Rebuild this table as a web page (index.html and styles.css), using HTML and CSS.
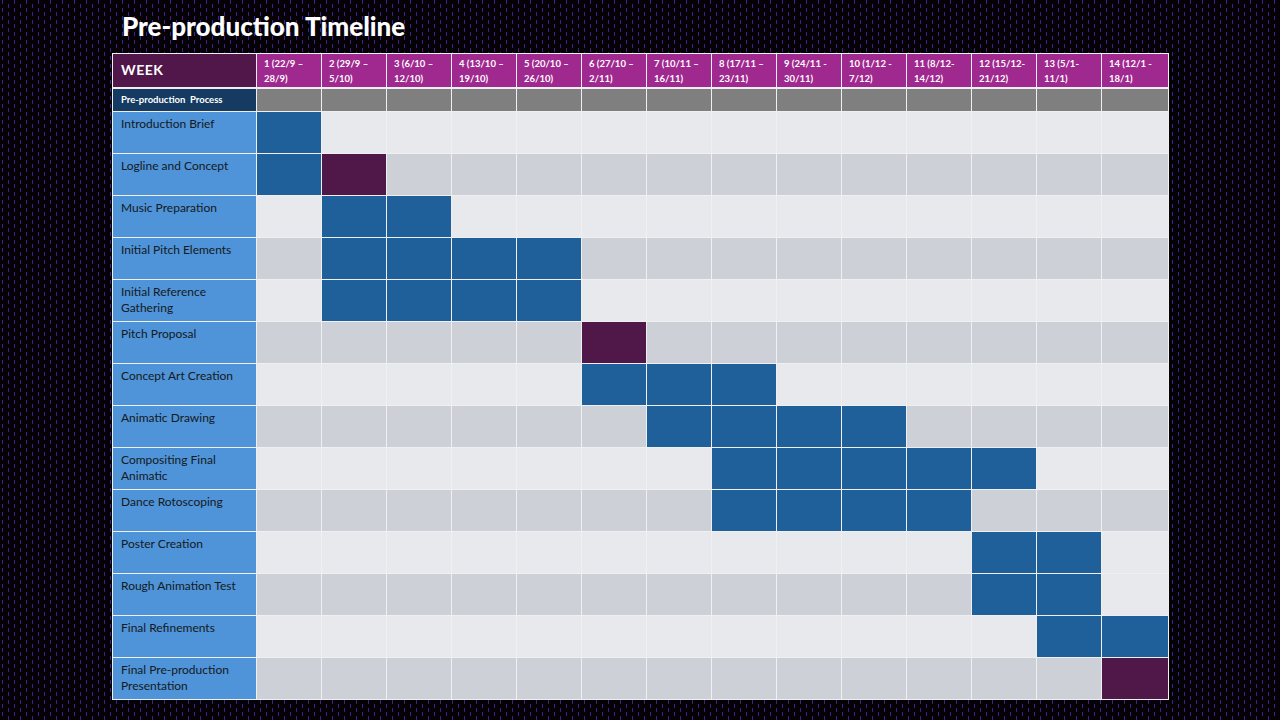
FILE: index.html
```html
<!DOCTYPE html>
<html lang="en">
<head>
<meta charset="utf-8">
<title>Pre-production Timeline</title>
<link rel="stylesheet" href="styles.css">
</head>
<body>
<main class="page">
  <h1 class="title">Pre-production Timeline</h1>
  <div class="timeline">
    <div class="row head">
      <div class="label week">WEEK</div>
      <div class="wk">1 (22/9 –<br>28/9)</div>
      <div class="wk">2 (29/9 –<br>5/10)</div>
      <div class="wk">3 (6/10 –<br>12/10)</div>
      <div class="wk">4 (13/10 –<br>19/10)</div>
      <div class="wk">5 (20/10 –<br>26/10)</div>
      <div class="wk">6 (27/10 –<br>2/11)</div>
      <div class="wk">7 (10/11 –<br>16/11)</div>
      <div class="wk">8 (17/11 –<br>23/11)</div>
      <div class="wk">9 (24/11 -<br>30/11)</div>
      <div class="wk">10 (1/12 -<br>7/12)</div>
      <div class="wk">11 (8/12-<br>14/12)</div>
      <div class="wk">12 (15/12-<br>21/12)</div>
      <div class="wk">13 (5/1-<br>11/1)</div>
      <div class="wk">14 (12/1 -<br>18/1)</div>
    </div>
    <div class="row section">
      <div class="label proc">Pre-production&nbsp; Process</div>
      <div class="g"></div><div class="g"></div><div class="g"></div><div class="g"></div><div class="g"></div><div class="g"></div><div class="g"></div>
      <div class="g"></div><div class="g"></div><div class="g"></div><div class="g"></div><div class="g"></div><div class="g"></div><div class="g"></div>
    </div>
    <div class="row odd">
      <div class="label task">Introduction Brief</div>
      <div class="c b"></div><div class="c"></div><div class="c"></div><div class="c"></div><div class="c"></div><div class="c"></div><div class="c"></div>
      <div class="c"></div><div class="c"></div><div class="c"></div><div class="c"></div><div class="c"></div><div class="c"></div><div class="c"></div>
    </div>
    <div class="row even">
      <div class="label task">Logline and Concept</div>
      <div class="c b"></div><div class="c p"></div><div class="c"></div><div class="c"></div><div class="c"></div><div class="c"></div><div class="c"></div>
      <div class="c"></div><div class="c"></div><div class="c"></div><div class="c"></div><div class="c"></div><div class="c"></div><div class="c"></div>
    </div>
    <div class="row odd">
      <div class="label task">Music Preparation</div>
      <div class="c"></div><div class="c b"></div><div class="c b"></div><div class="c"></div><div class="c"></div><div class="c"></div><div class="c"></div>
      <div class="c"></div><div class="c"></div><div class="c"></div><div class="c"></div><div class="c"></div><div class="c"></div><div class="c"></div>
    </div>
    <div class="row even">
      <div class="label task">Initial Pitch Elements</div>
      <div class="c"></div><div class="c b"></div><div class="c b"></div><div class="c b"></div><div class="c b"></div><div class="c"></div><div class="c"></div>
      <div class="c"></div><div class="c"></div><div class="c"></div><div class="c"></div><div class="c"></div><div class="c"></div><div class="c"></div>
    </div>
    <div class="row odd">
      <div class="label task">Initial Reference Gathering</div>
      <div class="c"></div><div class="c b"></div><div class="c b"></div><div class="c b"></div><div class="c b"></div><div class="c"></div><div class="c"></div>
      <div class="c"></div><div class="c"></div><div class="c"></div><div class="c"></div><div class="c"></div><div class="c"></div><div class="c"></div>
    </div>
    <div class="row even">
      <div class="label task">Pitch Proposal</div>
      <div class="c"></div><div class="c"></div><div class="c"></div><div class="c"></div><div class="c"></div><div class="c p"></div><div class="c"></div>
      <div class="c"></div><div class="c"></div><div class="c"></div><div class="c"></div><div class="c"></div><div class="c"></div><div class="c"></div>
    </div>
    <div class="row odd">
      <div class="label task">Concept Art Creation</div>
      <div class="c"></div><div class="c"></div><div class="c"></div><div class="c"></div><div class="c"></div><div class="c b"></div><div class="c b"></div>
      <div class="c b"></div><div class="c"></div><div class="c"></div><div class="c"></div><div class="c"></div><div class="c"></div><div class="c"></div>
    </div>
    <div class="row even">
      <div class="label task">Animatic Drawing</div>
      <div class="c"></div><div class="c"></div><div class="c"></div><div class="c"></div><div class="c"></div><div class="c"></div><div class="c b"></div>
      <div class="c b"></div><div class="c b"></div><div class="c b"></div><div class="c"></div><div class="c"></div><div class="c"></div><div class="c"></div>
    </div>
    <div class="row odd">
      <div class="label task">Compositing Final Animatic</div>
      <div class="c"></div><div class="c"></div><div class="c"></div><div class="c"></div><div class="c"></div><div class="c"></div><div class="c"></div>
      <div class="c b"></div><div class="c b"></div><div class="c b"></div><div class="c b"></div><div class="c b"></div><div class="c"></div><div class="c"></div>
    </div>
    <div class="row even">
      <div class="label task">Dance Rotoscoping</div>
      <div class="c"></div><div class="c"></div><div class="c"></div><div class="c"></div><div class="c"></div><div class="c"></div><div class="c"></div>
      <div class="c b"></div><div class="c b"></div><div class="c b"></div><div class="c b"></div><div class="c"></div><div class="c"></div><div class="c"></div>
    </div>
    <div class="row odd">
      <div class="label task">Poster Creation</div>
      <div class="c"></div><div class="c"></div><div class="c"></div><div class="c"></div><div class="c"></div><div class="c"></div><div class="c"></div>
      <div class="c"></div><div class="c"></div><div class="c"></div><div class="c"></div><div class="c b"></div><div class="c b"></div><div class="c"></div>
    </div>
    <div class="row even">
      <div class="label task">Rough Animation Test</div>
      <div class="c"></div><div class="c"></div><div class="c"></div><div class="c"></div><div class="c"></div><div class="c"></div><div class="c"></div>
      <div class="c"></div><div class="c"></div><div class="c"></div><div class="c"></div><div class="c b"></div><div class="c b"></div><div class="c last"></div>
    </div>
    <div class="row odd">
      <div class="label task">Final Refinements</div>
      <div class="c"></div><div class="c"></div><div class="c"></div><div class="c"></div><div class="c"></div><div class="c"></div><div class="c"></div>
      <div class="c"></div><div class="c"></div><div class="c"></div><div class="c"></div><div class="c"></div><div class="c b"></div><div class="c b"></div>
    </div>
    <div class="row even">
      <div class="label task">Final Pre-production Presentation</div>
      <div class="c"></div><div class="c"></div><div class="c"></div><div class="c"></div><div class="c"></div><div class="c"></div><div class="c"></div>
      <div class="c"></div><div class="c"></div><div class="c"></div><div class="c"></div><div class="c"></div><div class="c"></div><div class="c p"></div>
    </div>
  </div>
</main>
</body>
</html>
```

FILE: styles.css
```css
html, body {
  margin: 0;
  padding: 0;
}

body {
  width: 1280px;
  height: 720px;
  overflow: hidden;
  background-color: #040207;
  background-image:
    conic-gradient(at 1px 4px, transparent 270deg, #442084 0),
    conic-gradient(at 1px 4px, transparent 270deg, #442084 0);
  background-size: 12px 8px, 12px 8px;
  background-position: 2px 0, 8px 4px;
  font-family: Lato, "Open Sans", "Liberation Sans", sans-serif;
}

.page {
  padding: 10px 0 0 112px;
}

.title {
  margin: 0;
  height: 43px;
  padding-left: 10px;
  color: #ffffff;
  font-family: Lato, "Open Sans", sans-serif;
  font-weight: 900;
  font-size: 26px;
  line-height: 32px;
  letter-spacing: 0;
}

.timeline {
  display: grid;
  grid-template-columns: 143px repeat(13, 64px) 66px;
  grid-template-rows: 34px 22px repeat(14, 41px);
  gap: 1px;
  padding: 1px;
  width: max-content;
  background: #eef0f2;
}

.row {
  display: contents;
}

.head > div {
  margin-bottom: 1px;
}

.label {
  padding: 0 8px;
  box-sizing: border-box;
}

.week {
  background: #51164a;
  color: #ffffff;
  font-weight: 700;
  font-size: 14px;
  line-height: 30px;
  letter-spacing: 0.5px;
  padding-top: 1px;
}

.wk {
  background: #a0298f;
  color: #ffffff;
  font-weight: 700;
  font-size: 9.5px;
  line-height: 15px;
  padding: 2px 0 0 7px;
  white-space: nowrap;
}

.proc {
  background: #163b62;
  color: #ffffff;
  font-weight: 700;
  font-size: 9.5px;
  line-height: 21px;
}

.g {
  background: #7f7f7f;
}

.task {
  background: #4f93d8;
  color: #141a22;
  font-size: 12px;
  line-height: 16px;
  padding-top: 4px;
  padding-right: 6px;
}

.odd .c {
  background: #e7e9ec;
}

.even .c {
  background: #cdd1d7;
}

.even .c.last {
  background: #e7e9ec;
}

.row .c.b {
  background: #1f5f9a;
}

.row .c.p {
  background: #4f1848;
}
```
